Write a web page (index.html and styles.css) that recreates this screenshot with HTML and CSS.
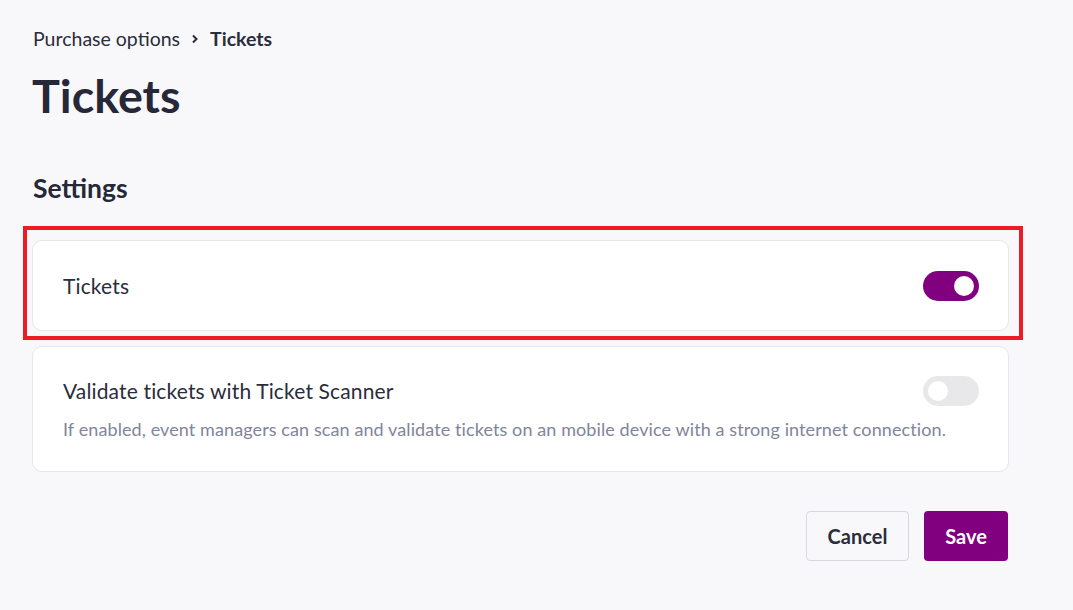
FILE: index.html
```html
<!DOCTYPE html>
<html>
<head>
<meta charset="utf-8">
<link rel="stylesheet" href="styles.css">
</head>
<body>
<main class="page">
  <nav class="crumbs">
    <span class="crumb">Purchase options</span>
    <svg class="chev" width="8" height="12" viewBox="0 0 8 12"><path d="M2 2.5 L5.5 6 L2 9.5" fill="none" stroke="#2a2d3a" stroke-width="2"/></svg>
    <span class="crumb current">Tickets</span>
  </nav>
  <h1 class="title">Tickets</h1>
  <h2 class="section">Settings</h2>
  <div class="cards">
    <div class="card-wrap">
      <div class="card">
        <div class="card-row">
          <span class="card-title">Tickets</span>
          <span class="toggle on"><span class="knob"></span></span>
        </div>
      </div>
      <div class="highlight"></div>
    </div>
    <div class="card tall">
      <div class="card-row">
        <span class="card-title">Validate tickets with Ticket Scanner</span>
        <span class="toggle off"><span class="knob"></span></span>
      </div>
      <p class="desc">If enabled, event managers can scan and validate tickets on an mobile device with a strong internet connection.</p>
    </div>
  </div>
  <div class="actions">
    <button class="btn cancel">Cancel</button>
    <button class="btn save">Save</button>
  </div>
</main>
</body>
</html>
```

FILE: styles.css
```css
html, body {
  margin: 0;
  padding: 0;
  background: #f8f8fb;
  font-family: Lato, "Noto Sans", sans-serif;
  color: #2a2d3a;
}
.page {
  width: 976px;
  padding: 28px 0 0 33px;
  margin: 0;
}
.crumbs {
  display: flex;
  align-items: center;
  font-size: 19.5px;
  line-height: 22px;
  height: 22px;
}
.crumb { color: #2a2d3a; }
.crumb.current { font-weight: 700; }
.chev { margin: 0 11px 0 11px; }
.title {
  font-size: 46.7px;
  font-weight: 700;
  line-height: 56px;
  margin: 17px 0 0 -1px;
  color: #262837;
}
.section {
  font-size: 26.5px;
  font-weight: 700;
  line-height: 30px;
  margin: 50px 0 0 0;
  color: #262837;
}
.cards {
  margin-top: 37px;
  margin-left: -1px;
  display: flex;
  flex-direction: column;
  gap: 15px;
}
.card-wrap { position: relative; }
.card {
  background: #fff;
  border: 1px solid #e6e6ec;
  border-radius: 10px;
  padding: 0 29px 0 30px;
  height: 89px;
  display: flex;
  flex-direction: column;
  justify-content: center;
}
.card.tall {
  height: auto;
  padding-top: 29px;
  padding-bottom: 30px;
}
.card-row {
  display: flex;
  align-items: center;
  justify-content: space-between;
}
.card-title {
  font-size: 21px;
  line-height: 30px;
  color: #2a2d3a;
  letter-spacing: 0.15px;
}
.toggle {
  width: 56px;
  height: 30px;
  border-radius: 15px;
  position: relative;
  display: inline-block;
}
.toggle.on { background: #800080; }
.toggle.off { background: #e8e8ea; }
.knob {
  position: absolute;
  top: 5px;
  width: 20px;
  height: 20px;
  border-radius: 50%;
  background: #fff;
}
.toggle.on .knob { left: 31px; }
.toggle.off .knob { left: 5px; }
.desc {
  margin: 11px 0 0 0;
  font-size: 18px;
  line-height: 24px;
  color: #80859a;
  letter-spacing: 0.1px;
}
.highlight {
  position: absolute;
  left: -9px;
  right: -14px;
  top: -14px;
  bottom: -9px;
  border: 4px solid #ed1c24;
  pointer-events: none;
}
.actions {
  display: flex;
  justify-content: flex-end;
  gap: 15px;
  margin-top: 39px;
  margin-right: 1px;
}
.btn {
  font-family: Lato, "Noto Sans", sans-serif;
  font-size: 20px;
  font-weight: 700;
  height: 50px;
  border-radius: 4px;
  cursor: pointer;
}
.cancel {
  width: 103px;
  background: #f8f8fb;
  border: 1px solid #d8d8de;
  color: #2a2d3a;
}
.save {
  width: 84px;
  background: #800080;
  border: none;
  color: #fff;
}
```
